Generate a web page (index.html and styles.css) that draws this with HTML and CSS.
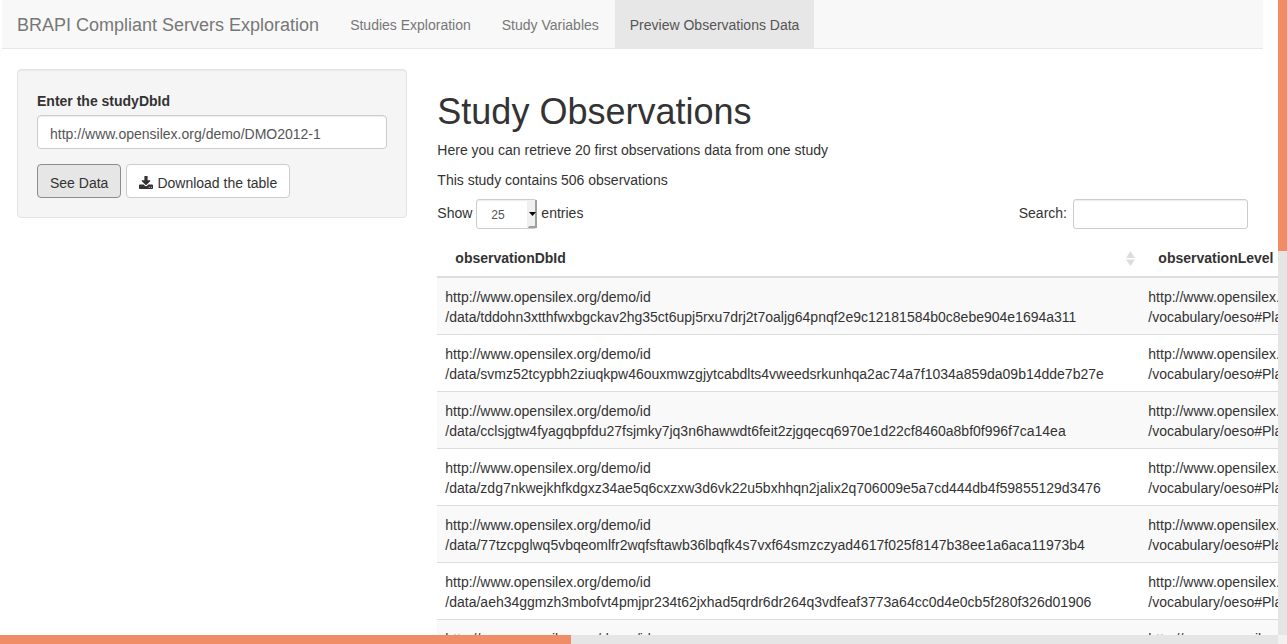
FILE: index.html
```html
<!DOCTYPE html>
<html lang="en">
<head>
<meta charset="utf-8">
<title>BRAPI Compliant Servers Exploration</title>
<link rel="stylesheet" href="styles.css">
</head>
<body>
<div class="frame">
  <div class="viewport">
    <nav class="navbar">
      <a class="brand" href="#">BRAPI Compliant Servers Exploration</a>
      <a class="nav-link" href="#">Studies Exploration</a>
      <a class="nav-link" href="#">Study Variables</a>
      <a class="nav-link active" href="#">Preview Observations Data</a>
    </nav>
    <div class="row">
      <aside class="side">
        <form class="well">
          <label class="field-label" for="study">Enter the studyDbId</label>
          <input class="control study" id="study" type="text" value="http://www.opensilex.org/demo/DMO2012-1">
          <div class="buttons">
            <button class="btn pressed" type="button">See Data</button>
            <button class="btn" type="button"><svg class="icon" viewBox="0 0 1664 1536" aria-hidden="true"><path d="M1280 1216q0-26-19-45t-45-19-45 19-19 45 19 45 45 19 45-19 19-45zm256 0q0-26-19-45t-45-19-45 19-19 45 19 45 45 19 45-19 19-45zm128-224v320q0 40-28 68t-68 28H96q-40 0-68-28t-28-68V992q0-40 28-68t68-28h465l135 136q58 56 136 56t136-56l136-136h464q40 0 68 28t28 68zm-325-569q17 41-14 70l-448 448q-18 19-45 19t-45-19L339 493q-31-29-14-70 17-39 59-39h256V-64q0-26 19-45t45-19h256q26 0 45 19t19 45v448h256q42 0 59 39z"/></svg>Download the table</button>
          </div>
        </form>
      </aside>
      <main class="main">
        <h1 class="title">Study Observations</h1>
        <p class="text">Here you can retrieve 20 first observations data from one study</p>
        <p class="text">This study contains 506 observations</p>
        <div class="toolbar">
          <div class="tool">
            <label for="length">Show</label>
            <span class="select-box">
              <select class="control small" id="length"><option>10</option><option selected>25</option><option>50</option><option>100</option></select>
              <svg class="drop" viewBox="0 0 10 28" aria-hidden="true"><path fill="#f0f0f0" d="M0 0h10v28H0z"/><path fill="#a0a0a0" d="M8 0h2v28H1l1-2h6z"/><path d="M2 12h7L5.500 16z"/></svg>
            </span>
            <label for="length">entries</label>
          </div>
          <div class="tool search-tool">
            <label for="search">Search:</label>
            <input class="control small search" id="search" type="search">
          </div>
        </div>
        <table class="table">
          <thead>
            <tr>
              <th class="id-col"><span class="head">observationDbId<svg class="sort" viewBox="0 0 9 15" aria-hidden="true"><path d="M4.500 0L9 7H0zM0 8.500h9L4.500 15z"/></svg></span></th>
              <th>observationLevel</th>
            </tr>
          </thead>
          <tbody>
            <tr><td>http://www.opensilex.org/demo/id<br>/data/tddohn3xtthfwxbgckav2hg35ct6upj5rxu7drj2t7oaljg64pnqf2e9c12181584b0c8ebe904e1694a311</td><td>http://www.opensilex.org<br>/vocabulary/oeso#Plant</td></tr>
            <tr><td>http://www.opensilex.org/demo/id<br>/data/svmz52tcypbh2ziuqkpw46ouxmwzgjytcabdlts4vweedsrkunhqa2ac74a7f1034a859da09b14dde7b27e</td><td>http://www.opensilex.org<br>/vocabulary/oeso#Plant</td></tr>
            <tr><td>http://www.opensilex.org/demo/id<br>/data/cclsjgtw4fyagqbpfdu27fsjmky7jq3n6hawwdt6feit2zjgqecq6970e1d22cf8460a8bf0f996f7ca14ea</td><td>http://www.opensilex.org<br>/vocabulary/oeso#Plant</td></tr>
            <tr><td>http://www.opensilex.org/demo/id<br>/data/zdg7nkwejkhfkdgxz34ae5q6cxzxw3d6vk22u5bxhhqn2jalix2q706009e5a7cd444db4f59855129d3476</td><td>http://www.opensilex.org<br>/vocabulary/oeso#Plant</td></tr>
            <tr><td>http://www.opensilex.org/demo/id<br>/data/77tzcpglwq5vbqeomlfr2wqfsftawb36lbqfk4s7vxf64smzczyad4617f025f8147b38ee1a6aca11973b4</td><td>http://www.opensilex.org<br>/vocabulary/oeso#Plant</td></tr>
            <tr><td>http://www.opensilex.org/demo/id<br>/data/aeh34ggmzh3mbofvt4pmjpr234t62jxhad5qrdr6dr264q3vdfeaf3773a64cc0d4e0cb5f280f326d01906</td><td>http://www.opensilex.org<br>/vocabulary/oeso#Plant</td></tr>
            <tr><td>http://www.opensilex.org/demo/id</td><td>http://www.opensilex.org</td></tr>
          </tbody>
        </table>
      </main>
    </div>
  </div>
  <div class="track"><div class="thumb" style="height: 39.5%"></div></div>
  <div class="track"><div class="thumb" style="width: 44.7%"></div></div>
  <div class="corner"></div>
</div>
</body>
</html>
```
FILE: styles.css
```css
* {
  box-sizing: border-box;
}

body {
  margin: 0;
  background: #fff;
  color: #333;
  font: 14px/20px "Liberation Sans", Arial, sans-serif;
}

/* Scrolling frame: content, two scroll tracks and their corner */
.frame {
  display: grid;
  grid-template: minmax(0, 1fr) 9px / minmax(0, 1fr) 9px;
  height: 100vh;
}

.viewport {
  overflow: hidden;
  padding: 0 15px 0 2px;
}

.track {
  background: #e5e5e5;
}

.thumb {
  height: 100%;
  background: #f08d67;
}

.corner {
  background: #f2f1f0;
}

/* Navigation */
.navbar {
  display: flex;
  gap: 1px;
  margin-bottom: 20px;
  background: #f8f8f8;
  border-bottom: 1px solid #e7e7e7;
}

.brand,
.nav-link {
  margin-bottom: -1px;
  padding: 15px 15px 14px;
  color: #777;
  text-decoration: none;
  white-space: nowrap;
}

.brand {
  font-size: 18px;
}

.active {
  background: #e7e7e7;
  color: #555;
}

/* Columns */
.row {
  display: grid;
  grid-template-columns: minmax(0, 1fr) minmax(0, 2fr);
}

.side,
.main {
  padding: 0 15px;
}

.well {
  padding: 20px 19px 19px;
  background: #f5f5f5;
  border: 1px solid #e3e3e3;
  border-radius: 4px;
  box-shadow: inset 0 1px 1px rgba(0, 0, 0, 0.05);
}

.field-label {
  display: block;
  padding-top: 1px;
  margin-bottom: 4px;
  font-weight: bold;
}

.control {
  height: 34px;
  margin: 0;
  padding: 6px 12px;
  background: #fff;
  border: 1px solid #ccc;
  border-radius: 4px;
  box-shadow: inset 0 1px 1px rgba(0, 0, 0, 0.075);
  color: #555;
  font: inherit;
  appearance: none;
}

.study {
  display: block;
  width: 100%;
  padding: 8px 12px 4px;
}

.buttons {
  display: flex;
  gap: 5px;
  margin-top: 15px;
}

.btn {
  display: flex;
  align-items: center;
  gap: 4px;
  height: 34px;
  padding: 4px 12px 0;
  background: #fff;
  border: 1px solid #ccc;
  border-radius: 4px;
  color: #333;
  font: inherit;
  white-space: nowrap;
}

.pressed {
  background: #e6e6e6;
  border-color: #8c8c8c;
}

.icon {
  width: 14px;
  height: 13px;
  overflow: visible;
  fill: #333;
}

/* Study observations */
.title {
  margin: 23px 0 7px;
  font-size: 36px;
  font-weight: 500;
  line-height: 40px;
}

.text {
  margin: 0 0 9px;
  padding-top: 1px;
}

.toolbar {
  display: flex;
  justify-content: space-between;
}

.tool {
  display: flex;
  gap: 4px;
}

.tool label {
  line-height: 28px;
}

.search-tool {
  gap: 6px;
}

.small {
  height: 30px;
  padding: 5px 14px;
  border-radius: 3px;
  font-size: 12px;
}

.search {
  width: 175px;
}

.select-box {
  position: relative;
}

.select-box .control {
  width: 61px;
}

.drop {
  position: absolute;
  top: 1px;
  right: 0;
  width: 10px;
  height: 28px;
}

.table {
  width: max-content;
  margin-top: 11px;
  border-spacing: 0;
  white-space: nowrap;
}

.table th {
  padding: 8px 5px 8px 18px;
  border-bottom: 2px solid #ddd;
  text-align: left;
}

.id-col {
  width: 703px;
}

.head {
  display: flex;
  align-items: center;
  justify-content: space-between;
}

.sort {
  width: 9px;
  height: 15px;
  fill: #ddd;
}

.table td {
  padding: 9px 8px 7px;
  border-top: 1px solid #ddd;
}

.table tbody tr:first-child td {
  border-top: 0;
}

.table tbody tr:nth-child(odd) {
  background: #f9f9f9;
}
```
